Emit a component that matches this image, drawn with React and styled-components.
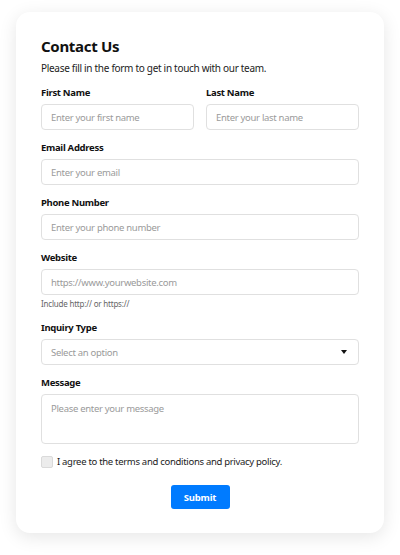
import React from 'react';
import styled, { createGlobalStyle } from 'styled-components';

const GlobalStyle = createGlobalStyle`
  html, body {
    margin: 0;
    padding: 0;
    background: #fff;
  }
  body {
    font-family: "Noto Sans", "Open Sans", sans-serif;
    color: #222;
    letter-spacing: -0.3px;
  }
`;

const Page = styled.div`
  padding: 12px 16px 20px;
`;

const Card = styled.form`
  background: #fff;
  border-radius: 14px;
  box-shadow: 0 4px 18px rgba(0, 0, 0, 0.1);
  padding: 22px 25px 24px;
`;

const Title = styled.h2`
  margin: 0;
  font-size: 15px;
  line-height: 24px;
  font-weight: 700;
  color: #111;
`;

const Subtitle = styled.p`
  margin: 2px 0 9px;
  font-size: 10px;
  line-height: 16px;
  color: #222;
`;

const Row = styled.div`
  display: grid;
  grid-template-columns: 1fr 1fr;
  gap: 12px;
`;

const Field = styled.div`
  display: flex;
  flex-direction: column;
  margin-bottom: ${(p) => p.$mb ?? 10}px;
`;

const Label = styled.label`
  font-size: 9.5px;
  line-height: 16px;
  font-weight: 700;
  color: #111;
  margin-bottom: 3px;
`;

const Input = styled.input`
  box-sizing: border-box;
  height: 26px;
  width: 100%;
  border: 1px solid #e0e0e0;
  border-radius: 4px;
  padding: 0 9px;
  font-family: inherit;
  font-size: 9.5px;
  letter-spacing: -0.3px;
  color: #222;
  outline: none;
  &::placeholder {
    color: #9a9a9a;
  }
`;

const Help = styled.span`
  font-size: 8px;
  line-height: 14px;
  letter-spacing: -0.2px;
  color: #666;
  margin-top: 2px;
`;

const SelectBox = styled.div`
  box-sizing: border-box;
  height: 26px;
  border: 1px solid #e0e0e0;
  border-radius: 4px;
  padding: 0 11px 0 9px;
  display: flex;
  align-items: center;
  justify-content: space-between;
  font-size: 9.5px;
  color: #9a9a9a;
`;

const Caret = styled.span`
  width: 0;
  height: 0;
  border-left: 3.5px solid transparent;
  border-right: 3.5px solid transparent;
  border-top: 4px solid #111;
`;

const TextArea = styled.textarea`
  box-sizing: border-box;
  height: 50px;
  width: 100%;
  resize: none;
  border: 1px solid #e0e0e0;
  border-radius: 4px;
  padding: 7px 9px;
  font-family: inherit;
  font-size: 9.5px;
  letter-spacing: -0.3px;
  outline: none;
  &::placeholder {
    color: #9a9a9a;
  }
`;

const Check = styled.label`
  display: flex;
  align-items: center;
  gap: 4px;
  font-size: 9.5px;
  line-height: 16px;
  color: #222;
  margin-top: 6px;
`;

const Box = styled.span`
  box-sizing: border-box;
  width: 12px;
  height: 12px;
  border: 1px solid #dadada;
  border-radius: 2px;
  background: #ececec;
`;

const Actions = styled.div`
  display: flex;
  justify-content: center;
  margin-top: 15px;
`;

const Button = styled.button`
  height: 24px;
  width: 59px;
  border: none;
  border-radius: 3px;
  background: #007bff;
  color: #fff;
  font-family: inherit;
  font-size: 9.5px;
  letter-spacing: -0.2px;
  font-weight: 700;
  cursor: pointer;
`;

const App = () => (
  <>
    <GlobalStyle />
    <Page>
      <Card onSubmit={(e) => e.preventDefault()}>
        <Title>Contact Us</Title>
        <Subtitle>Please fill in the form to get in touch with our team.</Subtitle>
        <Row>
          <Field>
            <Label>First Name</Label>
            <Input placeholder="Enter your first name" />
          </Field>
          <Field>
            <Label>Last Name</Label>
            <Input placeholder="Enter your last name" />
          </Field>
        </Row>
        <Field>
          <Label>Email Address</Label>
          <Input placeholder="Enter your email" />
        </Field>
        <Field>
          <Label>Phone Number</Label>
          <Input placeholder="Enter your phone number" />
        </Field>
        <Field $mb={9}>
          <Label>Website</Label>
          <Input placeholder="https://www.yourwebsite.com" />
          <Help>Include http:// or https://</Help>
        </Field>
        <Field>
          <Label>Inquiry Type</Label>
          <SelectBox>
            Select an option
            <Caret />
          </SelectBox>
        </Field>
        <Field>
          <Label>Message</Label>
          <TextArea placeholder="Please enter your message" />
        </Field>
        <Check>
          <Box />
          I agree to the terms and conditions and privacy policy.
        </Check>
        <Actions>
          <Button type="submit">Submit</Button>
        </Actions>
      </Card>
    </Page>
  </>
);

export default App;
